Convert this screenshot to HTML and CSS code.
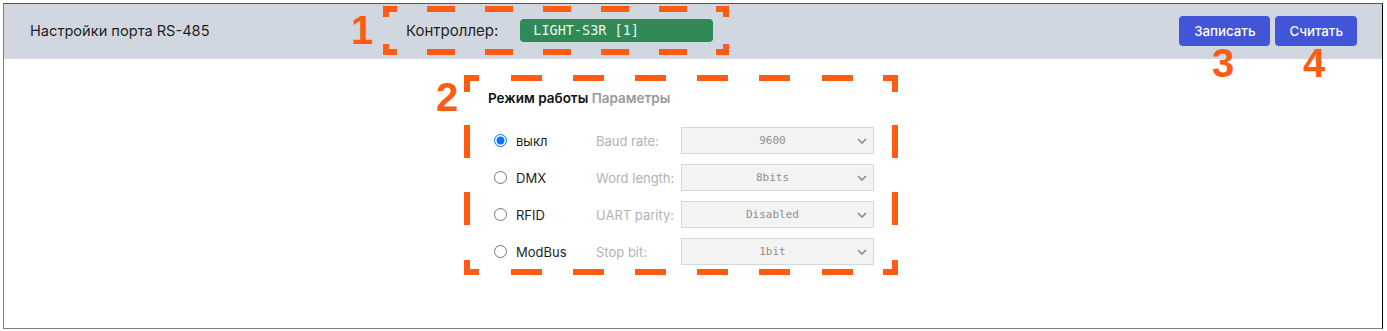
FILE: index.html
```html
<!DOCTYPE html>
<html>
<head>
    <meta charset="utf-8" />
    <meta name="viewport" content="width=device-width, initial-scale=1" />
    <link rel="stylesheet" href="styles.css">
</head>
<body>
    <div class="screen">
        <header class="topbar">
            <div class="title">Настройки порта RS-485</div>
            <div class="ctrl">
                <span class="ctrl-label">Контроллер:</span>
                <span class="ctrl-badge">LIGHT-S3R [1]</span>
            </div>
            <div class="actions">
                <button class="btn" type="button">Записать</button>
                <button class="btn" type="button">Считать</button>
            </div>
        </header>

        <main class="content">
            <div class="panel">
                <div class="tabs">
                    <span class="tab active">Режим работы</span>
                    <span class="tab">Параметры</span>
                </div>
                <div class="rows">
                    <div class="row">
                        <label class="mode"><input type="radio" name="mode" checked />выкл</label>
                        <span class="param">Baud rate:</span>
                        <div class="sel">
                            <select disabled><option>9600</option></select>
                            <svg class="chev" width="10" height="6" viewBox="0 0 10 6"><path d="M1 1l4 4 4-4" /></svg>
                        </div>
                    </div>
                    <div class="row">
                        <label class="mode"><input type="radio" name="mode" />DMX</label>
                        <span class="param">Word length:</span>
                        <div class="sel">
                            <select disabled><option>8bits</option></select>
                            <svg class="chev" width="10" height="6" viewBox="0 0 10 6"><path d="M1 1l4 4 4-4" /></svg>
                        </div>
                    </div>
                    <div class="row">
                        <label class="mode"><input type="radio" name="mode" />RFID</label>
                        <span class="param">UART parity:</span>
                        <div class="sel">
                            <select disabled><option>Disabled</option></select>
                            <svg class="chev" width="10" height="6" viewBox="0 0 10 6"><path d="M1 1l4 4 4-4" /></svg>
                        </div>
                    </div>
                    <div class="row">
                        <label class="mode"><input type="radio" name="mode" />ModBus</label>
                        <span class="param">Stop bit:</span>
                        <div class="sel">
                            <select disabled><option>1bit</option></select>
                            <svg class="chev" width="10" height="6" viewBox="0 0 10 6"><path d="M1 1l4 4 4-4" /></svg>
                        </div>
                    </div>
                </div>
            </div>
        </main>
    </div>

    <!-- annotation layer -->
    <svg class="marks" width="1387" height="331" viewBox="0 0 1387 331">
        <g class="dash">
            <line x1="383" y1="9" x2="729" y2="9" stroke-dasharray="14 30 28 30 28 30 28 30 28 30 28 29 13" />
            <line x1="383" y1="52" x2="729" y2="52" stroke-dasharray="14 30 28 30 28 30 28 30 28 30 28 29 13" />
            <line x1="386" y1="6" x2="386" y2="55" stroke-dasharray="11 27 11" />
            <line x1="726" y1="6" x2="726" y2="55" stroke-dasharray="11 27 11" />

            <line x1="464" y1="78" x2="898" y2="78" stroke-dasharray="15 32 31 31 31 31 31 31 31 31 31 32 31 30 15" />
            <line x1="464" y1="272" x2="898" y2="272" stroke-dasharray="15 32 31 31 31 31 31 31 31 31 31 32 31 30 15" />
            <line x1="467" y1="75" x2="467" y2="275" stroke-dasharray="17 33 33 34 33 35 15" />
            <line x1="895" y1="75" x2="895" y2="275" stroke-dasharray="17 33 33 34 33 35 15" />
        </g>
        <g class="nums">
            <text x="351" y="44">1</text>
            <text x="436" y="111">2</text>
            <text x="1212" y="77">3</text>
            <text x="1303" y="77">4</text>
        </g>
    </svg>
</body>
</html>
```

FILE: styles.css
```css
body {
    margin: 0;
    font-family: Inter, "Noto Sans", sans-serif;
    background-color: white;
    color: #1e1e1e;
    position: relative;
}

.screen {
    margin: 3px 4px 0 3px;
    height: 324px;
    border: 1px solid #808080;
    border-top-color: #555;
    border-right-color: #000;
    background-color: white;
}

/* top bar */
.topbar {
    box-sizing: border-box;
    height: 55px;
    padding: 0 25px 2px 26px;
    display: flex;
    align-items: center;
    background-color: #d1d7e1;
}

.title {
    flex: 0 0 376px;
    font-size: 14.6px;
    color: #1f1f1f;
}

.ctrl {
    display: flex;
    align-items: center;
    gap: 22px;
}

.ctrl-label {
    font-size: 15px;
    color: #1f1f1f;
}

.ctrl-badge {
    box-sizing: border-box;
    width: 193px;
    height: 23px;
    line-height: 23px;
    padding-left: 13px;
    border-radius: 4px;
    background-color: #2f8a57;
    color: #eef6e8;
    font-family: "DejaVu Sans Mono", "Liberation Mono", monospace;
    font-size: 13.5px;
}

.actions {
    margin-left: auto;
    display: flex;
    gap: 5px;
}

.btn {
    height: 30px;
    padding: 0 14px;
    border: 0;
    border-radius: 4px;
    background-color: #4254d7;
    color: #fff;
    font-family: Inter, "Noto Sans", sans-serif;
    font-size: 13.3px;
    font-weight: 500;
}

.btn:first-child {
    padding: 0 15px;
}

/* settings panel */
.panel {
    width: 410px;
    margin: 0 auto;
    padding-top: 31px;
}

.tabs {
    font-size: 13.5px;
    font-weight: 600;
    line-height: 16px;
    color: #999;
}

.tab.active {
    color: #111;
}

.rows {
    margin-top: 21px;
    display: flex;
    flex-direction: column;
    gap: 10px;
}

.row {
    display: flex;
    align-items: center;
    height: 27px;
    font-size: 13px;
}

.mode {
    flex: 0 0 108px;
    display: flex;
    align-items: center;
    color: #1e1e1e;
}

.mode input {
    width: 13px;
    height: 13px;
    margin: 0 9px 0 6px;
}

.param {
    flex: 0 0 85px;
    color: #b2b2b2;
}

.sel {
    position: relative;
    width: 193px;
    height: 27px;
}

.sel select {
    appearance: none;
    box-sizing: border-box;
    width: 100%;
    height: 100%;
    margin: 0;
    padding: 0 10px 0 0;
    border: 1px solid #d8d8d8;
    border-radius: 0;
    background-color: #f3f3f3;
    color: #8f8f8f;
    opacity: 1;
    font-family: "DejaVu Sans Mono", "Liberation Mono", monospace;
    font-size: 11px;
    text-align: center;
    text-align-last: center;
}

.chev {
    position: absolute;
    right: 7px;
    top: 11px;
    fill: none;
    stroke: #8a8a8a;
    stroke-width: 1.6;
}

/* annotation overlay */
.marks {
    position: absolute;
    left: 0;
    top: 0;
    pointer-events: none;
}

.dash line {
    stroke: #ff5b12;
    stroke-width: 6;
}

.nums text {
    fill: #ff5b12;
    font-family: "Liberation Sans", Arial, sans-serif;
    font-weight: bold;
    font-size: 40px;
}
```
